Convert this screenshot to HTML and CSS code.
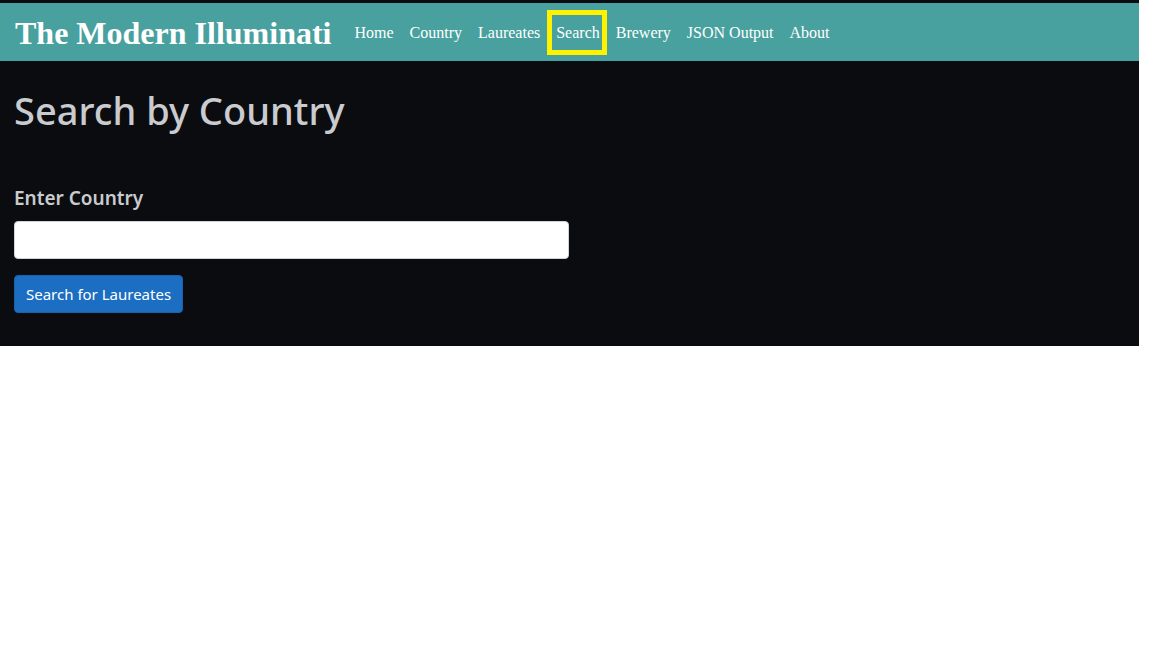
FILE: index.html
```html
<!DOCTYPE html>
<html lang="en">
<head>
<meta charset="utf-8">
<title>The Modern Illuminati</title>
<link rel="stylesheet" href="styles.css">
</head>
<body>
<div class="page">
  <nav class="nav">
    <a class="brand" href="#">The Modern Illuminati</a>
    <ul class="links">
      <li><a href="#">Home</a></li>
      <li><a href="#">Country</a></li>
      <li><a href="#">Laureates</a></li>
      <li><a class="active" href="#">Search</a></li>
      <li><a href="#">Brewery</a></li>
      <li><a href="#">JSON Output</a></li>
      <li><a href="#">About</a></li>
    </ul>
  </nav>
  <main class="content">
    <h1 class="title">Search by Country</h1>
    <form class="form">
      <label class="label" for="country">Enter Country</label>
      <input class="input" id="country" type="text">
      <button class="btn" type="button">Search for Laureates</button>
    </form>
  </main>
</div>
</body>
</html>
```
FILE: styles.css
```css
html, body {
  margin: 0;
  padding: 0;
  background: #ffffff;
}

.page {
  width: 1139px;
  background: #0b0c10;
  padding-top: 3px;
  font-family: "Noto Sans", "Open Sans", sans-serif;
}

.nav {
  height: 58px;
  background: #48a19e;
  display: flex;
  align-items: center;
  padding: 0 14px 0 15px;
}

.brand {
  font-family: "Liberation Serif", "Times New Roman", serif;
  font-weight: bold;
  font-size: 32px;
  color: #ffffff;
  text-decoration: none;
  margin-right: 19px;
  position: relative;
  top: 1px;
}

.links {
  list-style: none;
  margin: 0;
  padding: 0;
  display: flex;
  gap: 8px;
}

.links a {
  display: block;
  font-family: "Liberation Serif", "Times New Roman", serif;
  font-size: 16px;
  line-height: 19px;
  padding: 8px 4px;
  color: #ffffff;
  text-decoration: none;
}

.links a.active {
  outline: 5px solid #fff200;
  padding-right: 2px;
  margin-right: 2px;
}

.content {
  padding: 27px 14px 33px;
}

.title {
  margin: 0;
  font-size: 38px;
  font-weight: 500;
  line-height: 1.2;
  color: #c9cbce;
}

.form {
  margin-top: 49px;
  display: flex;
  flex-direction: column;
  align-items: flex-start;
}

.label {
  font-size: 19px;
  font-weight: 600;
  line-height: 30px;
  color: #c9cbce;
  margin-bottom: 8px;
}

.input {
  box-sizing: border-box;
  width: 555px;
  height: 38px;
  border: 1px solid #ced4da;
  border-radius: 4px;
  background: #ffffff;
  margin: 0 0 16px;
  padding: 6px 12px;
  font-size: 16px;
}

.btn {
  box-sizing: border-box;
  height: 38px;
  padding: 0 11px;
  border: 1px solid #1861ac;
  border-radius: 4px;
  background: #1b6ec2;
  color: #ffffff;
  font-family: "Noto Sans", "Open Sans", sans-serif;
  font-size: 15px;
}
```
